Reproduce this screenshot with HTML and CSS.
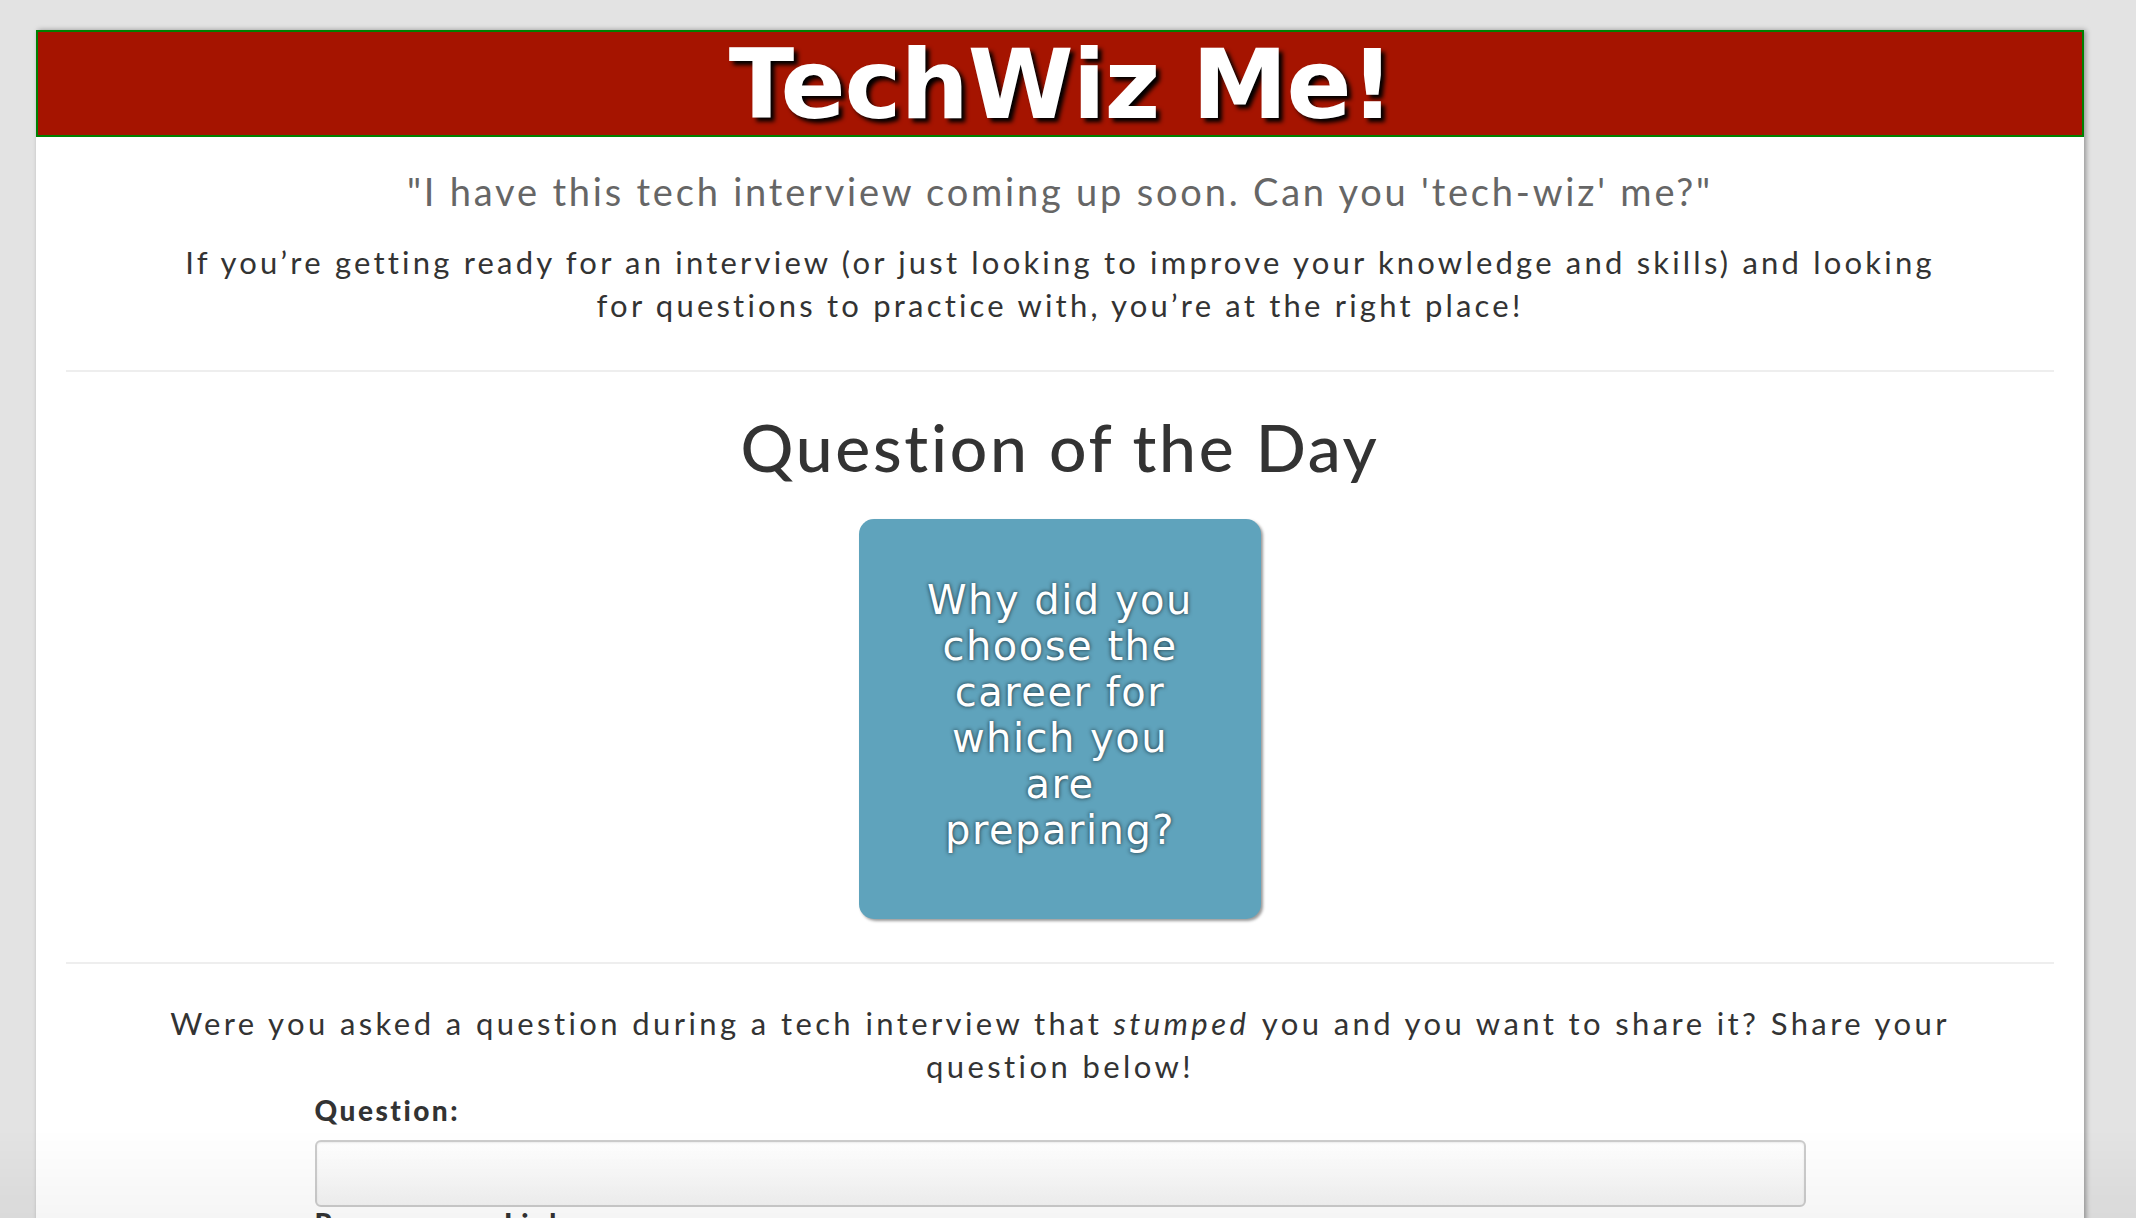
FILE: index.html
```html
<!DOCTYPE html>
<html lang="en">
<head>
<meta charset="utf-8">
<title>TechWiz Me!</title>
<link rel="stylesheet" href="styles.css">
</head>
<body>
<div class="page">
  <header class="banner">
    <h1 class="title">TechWiz Me!</h1>
  </header>
  <main class="content">
    <p class="quote">"I have this tech interview coming up soon. Can you 'tech-wiz' me?"</p>
    <p class="intro">If you’re getting ready for an interview (or just looking to improve your knowledge and skills) and looking for questions to practice with, you’re at the right place!</p>
    <hr class="rule">
    <section class="qotd">
      <h2 class="qotd-title">Question of the Day</h2>
      <div class="card">
        <p class="card-text">Why did you choose the career for which you are preparing?</p>
      </div>
    </section>
    <hr class="rule">
    <p class="share">Were you asked a question during a tech interview that <em>stumped</em> you and you want to share it? Share your question below!</p>
    <form class="share-form">
      <label class="field-label" for="q">Question:</label>
      <input class="field-input" id="q" type="text">
      <label class="field-label" for="r">Response or Link:</label>
      <textarea class="field-input area" id="r"></textarea>
    </form>
  </main>
</div>
<div class="fade"></div>
</body>
</html>
```

FILE: styles.css
```css
html, body {
  margin: 0;
  padding: 0;
}
body {
  background: #e3e3e3;
  font-family: Lato, "Open Sans", sans-serif;
  color: #333;
  height: 1218px;
  overflow: hidden;
}
.page {
  margin: 30px 0 0 36px;
  width: 2048px;
  background: #fff;
  box-shadow: 2px 0 5px rgba(0, 0, 0, 0.35);
  min-height: 1400px;
}
.banner {
  background: #a51400;
  border: 2px solid #008000;
  height: 103px;
  display: flex;
  align-items: center;
  justify-content: center;
}
.title {
  margin: 0;
  color: #fff;
  font-family: "DejaVu Sans", sans-serif;
  font-weight: bold;
  font-size: 96px;
  line-height: 103px;
  letter-spacing: -1px;
  text-shadow: 4px 4px 4px #000;
  position: relative;
  left: 1px;
  top: 2px;
}
.content {
  padding: 0 30px;
  text-align: center;
}
.quote {
  margin: 33px 0 0;
  font-size: 38px;
  line-height: 43px;
  color: #666;
  letter-spacing: 2.8px;
}
.intro {
  margin: 28px auto 0;
  font-size: 31px;
  line-height: 43px;
  letter-spacing: 3.2px;
  max-width: 1760px;
}
.rule {
  border: 0;
  border-top: 2px solid #eee;
  margin: 43px 0 0;
}
.qotd-title {
  margin: 37px 0 0;
  font-size: 66px;
  line-height: 75px;
  font-weight: 500;
  letter-spacing: 2.7px;
  color: #333;
}
.card {
  margin: 35px auto 40px;
  width: 402px;
  height: 400px;
  box-sizing: border-box;
  background: #5fa3bc;
  border-radius: 15px;
  box-shadow: 2px 2px 3px rgba(0, 0, 0, 0.4);
  display: flex;
  align-items: center;
  justify-content: center;
  padding: 0 62px;
}
.card-text {
  margin: 0;
  color: #fff;
  font-family: "DejaVu Sans", sans-serif;
  font-size: 40px;
  line-height: 46px;
  letter-spacing: 1.5px;
  text-shadow: 0 0 4px rgba(0, 0, 0, 0.75);
  position: relative;
  top: -4px;
}
.share {
  margin: 38px auto 0;
  font-size: 31px;
  line-height: 43px;
  letter-spacing: 3.4px;
  max-width: 1820px;
}
.share em {
  font-style: italic;
  padding-right: 2px;
}
.share-form {
  width: 75%;
  margin: 6px auto 0;
  text-align: left;
  display: flex;
  flex-direction: column;
}
.field-label {
  font-weight: 900;
  font-size: 28px;
  line-height: 32px;
  letter-spacing: 2.5px;
  color: #333;
}
.field-input {
  margin: 14px 0 0;
  height: 67px;
  box-sizing: border-box;
  border: 2px solid #ccc;
  border-radius: 6px;
  background: linear-gradient(#fff, #f4f4f4);
  box-shadow: inset 0 1px 2px rgba(0, 0, 0, 0.08);
  font-size: 26px;
}
.area {
  height: 150px;
}
.fade {
  position: fixed;
  left: 0;
  right: 0;
  bottom: 0;
  height: 90px;
  background: linear-gradient(rgba(0, 0, 0, 0), rgba(0, 0, 0, 0.04));
  pointer-events: none;
}
```
